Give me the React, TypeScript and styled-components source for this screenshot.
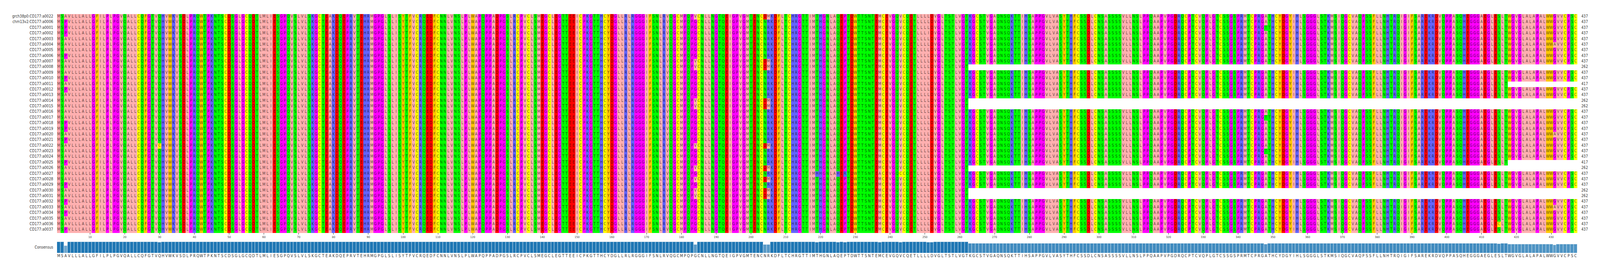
import React from "react";
import styled, { createGlobalStyle } from "styled-components";

const SEQ =
  "MSAVLLLALLGFILPLPGVQALLCQFGTVQHVWKVSDLPRQWTPKNTSCDSGLGCQDTLMLIESGPQVSLVLSKGCTEAKDQEPRVTEHRMGPGLSLISYTFVCRQEDFCNNLVNSLPLWAPQPPADPGSLRCPVCLSMEGCLEGTTEEICPKGTTHCYDGLLRLRGGGIFSNLRVQGCMPQPGCNLLNGTQEIGPVGMTENCNRKDFLTCHRGTTIMTHGNLAQEPTDWTTSNTEMCEVGQVCQETLLLLDVGLTSTLVGTKGCSTVGAQNSQKTTIHSAPPGVLVASYTHFCSSDLCNSASSSSVLLNSLPPQAAPVPGDRQCPTCVQPLGTCSSGSPRMTCPRGATHCYDGYIHLSGGGLSTKMSIQGCVAQPSSFLLNHTRQIGIFSAREKRDVQPPASQHEGGGAEGLESLTWGVGLALAPALWWGVVCPSC";

const ZAPPO: Record<string, string> = {
  I: "#ffafaf", L: "#ffafaf", V: "#ffafaf", A: "#ffafaf", M: "#ffafaf",
  F: "#ffc800", W: "#ffc800", Y: "#ffc800",
  K: "#6464ff", R: "#6464ff", H: "#6464ff",
  D: "#ff0000", E: "#ff0000",
  S: "#00ff00", T: "#00ff00", N: "#00ff00", Q: "#00ff00",
  P: "#ff00ff", G: "#ff00ff",
  C: "#ffff00",
};

const ROW_COUNT = 39;
const P_ROWS = [1, 2, 3, 7, 11, 13, 19, 20, 22, 26, 30, 33, 35, 38];
const DM_ROWS = [0, 8, 9, 15, 16, 23, 27, 29, 31, 32];
const T348_ROWS = [2, 18, 24];
const A431_ROWS = [5, 21, 34];
const SHORT: Record<number, number> = { 9: 262, 15: 262, 16: 262, 27: 262, 31: 262, 32: 262, 12: 417, 26: 417 };

function buildRow(i: number): string {
  const r = SEQ.split("");
  if (P_ROWS.includes(i)) r[2] = "P";
  if (DM_ROWS.includes(i)) {
    r[183] = "V";
    r[203] = "D";
    r[204] = "M";
  }
  if (T348_ROWS.includes(i)) r[347] = "T";
  if (A431_ROWS.includes(i)) r[430] = "A";
  if (i === 3) r[250] = "I";
  if (i === 37) r[414] = "C";
  if (i === 23) r[29] = "C";
  if (i === 28) {
    r[218] = "H";
    r[224] = "H";
    r[226] = "R";
    r[236] = "A";
    r[242] = "C";
    r[251] = "E";
  }
  return r.slice(0, SHORT[i] ?? 437).join("");
}

const ROWS = Array.from({ length: ROW_COUNT }, (_, i) => buildRow(i));

const rowName = (i: number) =>
  i === 0
    ? "grch38p0:CD177:a0022"
    : i === 1
      ? "chm13v2:CD177:a0006"
      : `CD177:a${String(i - 1).padStart(4, "0")}`;

const SCORES = SEQ.split("").map((c, col) => {
  let n = 0;
  for (const r of ROWS) if (r[col] === c) n++;
  return Math.round((n / ROW_COUNT) * 100) / 100;
});

const TICKS = Array.from({ length: 43 }, (_, i) => (i + 1) * 10);

const GlobalStyle = createGlobalStyle`
  html, body { margin: 0; padding: 0; background: #fff; overflow: hidden; }
  body {
    font-family: "DejaVu Sans Condensed", "DejaVu Sans", sans-serif;
    font-stretch: condensed;
    color: #333;
  }
`;

/* Every horizontal measure is a share of the window: --u is one unit of the 4634-wide drawing. */
const Page = styled.div`
  --u: calc(100vw / 4634);
  width: 100vw;
  height: 697px;
  padding-top: 36px;
  box-sizing: border-box;
  display: flex;
  flex-direction: column;
`;

const Row = styled.div`
  display: flex;
  height: 14.385px;
`;

const RowLabel = styled.div`
  width: calc(154 * var(--u));
  margin-right: calc(11 * var(--u));
  flex: none;
  text-align: right;
  font-size: 9.75px;
  line-height: 12.4px;
  white-space: nowrap;
  color: #333;
`;

const Track = styled.div`
  width: calc(4405 * var(--u));
  flex: none;
  display: grid;
  grid-template-columns: repeat(437, calc(10.08 * var(--u)));
`;

const Cell = styled.span<{ $bg: string }>`
  display: block;
  background: ${(p) => p.$bg};
  color: rgba(0, 0, 0, 0.68);
  font-size: 10px;
  line-height: 12.4px;
  text-align: center;
`;

const Count = styled.div`
  margin-left: calc(10 * var(--u));
  font-size: 9.75px;
  line-height: 12.4px;
  color: #333;
`;

const TickRow = styled.div`
  display: flex;
  height: 22px;
`;

const Spacer = styled.div`
  width: calc(165 * var(--u));
  flex: none;
`;

const Tick = styled.div<{ $col: number }>`
  grid-column: ${(p) => p.$col};
  display: flex;
  flex-direction: column;
  align-items: center;
`;

const TickMark = styled.div`
  width: 1px;
  height: 4px;
  flex: none;
  background: #333;
`;

const TickText = styled.div`
  margin-top: 2px;
  font-size: 7.4px;
  line-height: 9px;
  color: #333;
  white-space: nowrap;
`;

const BarsRow = styled.div`
  display: flex;
  height: 29px;
`;

const BarsLabel = styled.div`
  width: calc(154 * var(--u));
  margin-right: calc(11 * var(--u));
  flex: none;
  align-self: center;
  text-align: right;
  font-size: 9.75px;
  color: #333;
`;

const Bar = styled.div<{ $v: number }>`
  align-self: end;
  height: ${(p) => p.$v * 100}%;
  box-sizing: border-box;
  background: rgba(31, 119, 180, ${(p) => p.$v});
  border-top: 1px solid #cfe0ec;
  border-right: 1px solid #dbe8f1;
`;

const ConsensusRow = styled.div`
  display: flex;
  height: 16px;
`;

const ConsensusLetter = styled.span`
  display: block;
  font-size: 10px;
  line-height: 16px;
  text-align: center;
  color: #333;
`;

export default function App() {
  return (
    <>
      <GlobalStyle />
      <Page>
        {ROWS.map((seq, i) => (
          <Row key={i}>
            <RowLabel>{rowName(i)}</RowLabel>
            <Track>
              {seq.split("").map((c, j) => (
                <Cell key={j} $bg={ZAPPO[c]}>
                  {c}
                </Cell>
              ))}
            </Track>
            <Count>{seq.length}</Count>
          </Row>
        ))}
        <TickRow>
          <Spacer />
          <Track>
            {TICKS.map((t) => (
              <Tick key={t} $col={t}>
                <TickMark />
                <TickText>{t}</TickText>
              </Tick>
            ))}
          </Track>
        </TickRow>
        <BarsRow>
          <BarsLabel>Consensus</BarsLabel>
          <Track>
            {SCORES.map((v, j) => (
              <Bar key={j} $v={v} />
            ))}
          </Track>
        </BarsRow>
        <ConsensusRow>
          <Spacer />
          <Track>
            {SEQ.split("").map((c, j) => (
              <ConsensusLetter key={j}>{c}</ConsensusLetter>
            ))}
          </Track>
        </ConsensusRow>
      </Page>
    </>
  );
}
